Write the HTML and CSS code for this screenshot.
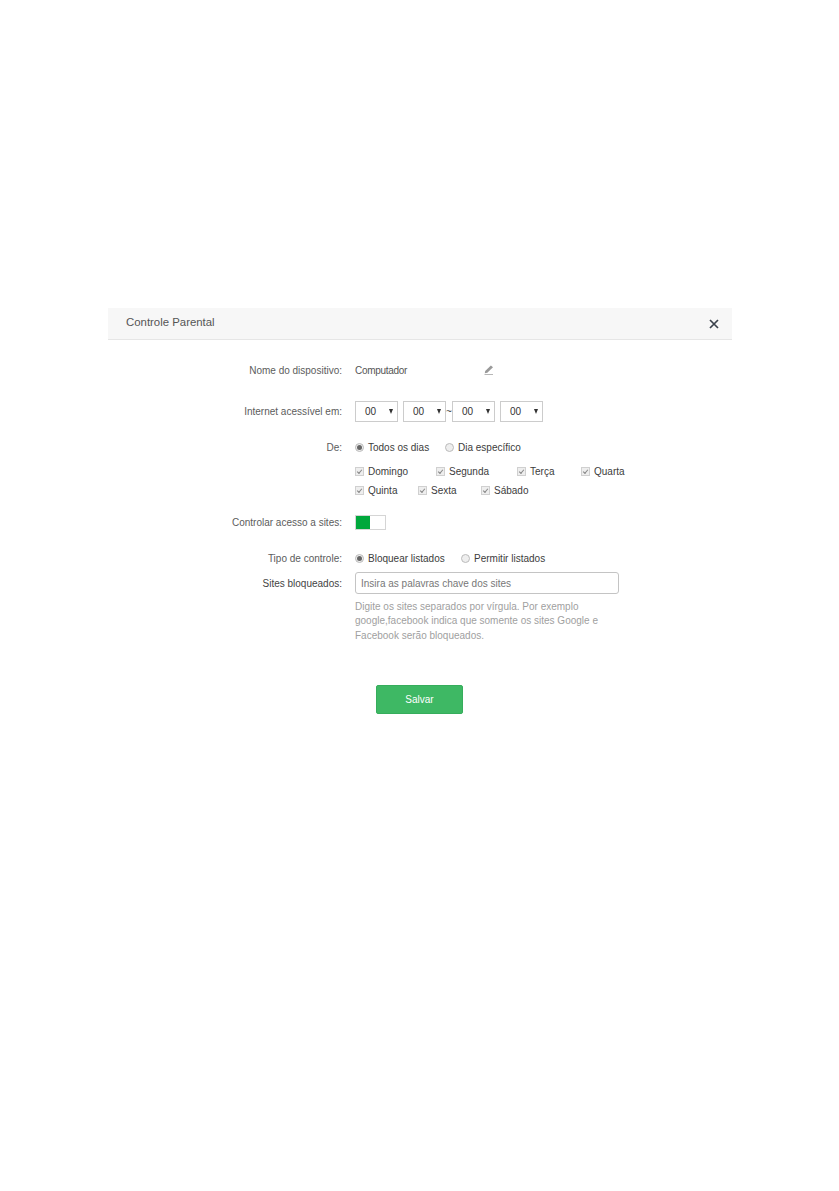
FILE: index.html
```
<!DOCTYPE html>
<html lang="pt-BR">
<head>
  <meta charset="UTF-8">
  <meta name="viewport" content="width=device-width, initial-scale=1.0">
  <title>Controle Parental</title>
  <link rel="stylesheet" href="styles.css">
</head>
<body>
  <div class="panel">
    <!-- Header -->
    <div class="panel-header">
      <span class="panel-title">Controle Parental</span>
      <svg class="close" viewBox="0 0 10 10"><path d="M1 1L9 9M9 1L1 9"/></svg>
    </div>

    <form class="panel-body">
      <!-- Device name -->
      <div class="row row-device">
        <span class="label">Nome do dispositivo:</span>
        <div class="field">
          <span class="device-name">Computador</span>
          <svg class="edit" viewBox="0 0 10 10"><path d="M1.2 6L6.9 .4L9 2.3L3.3 7.8L.8 8.2Z"/><path d="M.5 9H9V9.7H.5Z"/></svg>
        </div>
      </div>

      <!-- Time range -->
      <div class="row row-time">
        <span class="label">Internet acessível em:</span>
        <div class="field times">
          <div class="select"><span>00</span><i class="arrow"></i></div>
          <div class="select"><span>00</span><i class="arrow"></i></div>
          <span class="tilde">~</span>
          <div class="select"><span>00</span><i class="arrow"></i></div>
          <div class="select"><span>00</span><i class="arrow"></i></div>
        </div>
      </div>

      <!-- Days -->
      <div class="row row-from">
        <span class="label">De:</span>
        <div class="field">
          <label class="option opt-all"><input type="radio" name="days" checked><span>Todos os dias</span></label>
          <label class="option opt-day"><input type="radio" name="days"><span>Dia específico</span></label>
        </div>
      </div>
      <div class="row row-days">
        <div class="field">
          <label class="option day-dom"><input type="checkbox" checked disabled><span>Domingo</span></label>
          <label class="option day-seg"><input type="checkbox" checked disabled><span>Segunda</span></label>
          <label class="option day-ter"><input type="checkbox" checked disabled><span>Terça</span></label>
          <label class="option day-qua"><input type="checkbox" checked disabled><span>Quarta</span></label>
        </div>
        <div class="field">
          <label class="option day-qui"><input type="checkbox" checked disabled><span>Quinta</span></label>
          <label class="option day-sex"><input type="checkbox" checked disabled><span>Sexta</span></label>
          <label class="option day-sab"><input type="checkbox" checked disabled><span>Sábado</span></label>
        </div>
      </div>

      <!-- Site access -->
      <div class="row row-switch">
        <span class="label">Controlar acesso a sites:</span>
        <div class="field"><div class="switch"></div></div>
      </div>

      <div class="row row-type">
        <span class="label">Tipo de controle:</span>
        <div class="field">
          <label class="option opt-block"><input type="radio" name="type" checked><span>Bloquear listados</span></label>
          <label class="option opt-allow"><input type="radio" name="type"><span>Permitir listados</span></label>
        </div>
      </div>

      <div class="row row-sites">
        <span class="label label-dark">Sites bloqueados:</span>
        <div class="field"><input class="sites" type="text" placeholder="Insira as palavras chave dos sites"></div>
      </div>
      <p class="help">Digite os sites separados por vírgula. Por exemplo<br>google,facebook indica que somente os sites Google e<br>Facebook serão bloqueados.</p>

      <button class="save" type="button">Salvar</button>
    </form>
  </div>
</body>
</html>
```

FILE: styles.css
```
body {
  margin: 0;
  background: #fff;
  font-family: "Liberation Sans", Arial, sans-serif;
  font-size: 10px;
  color: #444;
}

.panel {
  width: 624px;
  margin: 308px 0 0 108px;
}

.panel-header {
  display: flex;
  justify-content: space-between;
  box-sizing: border-box;
  height: 32px;
  padding: 0 13px 0 18px;
  background: #f7f7f7;
  border-bottom: 1px solid #e6e6e6;
}

.panel-title {
  font-size: 11.4px;
  line-height: 29px;
  color: #555;
}

.close {
  width: 10px;
  height: 10px;
  margin-top: 11px;
  fill: none;
  stroke: #3b424c;
  stroke-width: 1.7;
}

/* Rows */
.row {
  display: grid;
  grid-template-columns: 234px 1fr;
  column-gap: 13px;
  align-items: center;
  height: 20px;
}

.label {
  text-align: right;
  color: #5c5c5c;
}

.label-dark {
  color: #444;
}

.field {
  display: flex;
  align-items: center;
}

.row-device { margin-top: 20px; }
.row-time { margin-top: 21px; height: 21px; }
.row-from { margin-top: 15px; }
.row-days {
  display: block;
  height: auto;
  margin-top: 5px;
  padding-left: 247px;
}
.row-days .field { height: 19px; }
.row-switch { margin-top: 12px; }
.row-type { margin-top: 16px; }
.row-sites { margin-top: 4px; height: 22px; }

.device-name {
  width: 129px;
  letter-spacing: -.3px;
  color: #555;
}

.edit {
  width: 10px;
  height: 10px;
  fill: #999;
}

/* Time selects */
.select {
  display: flex;
  align-items: center;
  justify-content: space-between;
  box-sizing: border-box;
  width: 43px;
  height: 21px;
  margin-right: 5px;
  padding: 0 4px 0 9px;
  border: 1px solid #ccc;
  color: #333;
}

.select:nth-child(2) {
  margin-right: 0;
}

.arrow {
  border: 2.5px solid transparent;
  border-top: 5px solid #333;
  border-bottom: 0;
}

.tilde {
  width: 6px;
  text-align: center;
}

/* Radios and checkboxes */
.option {
  display: flex;
  align-items: center;
  white-space: nowrap;
  color: #3c3c3c;
}

.option input {
  appearance: none;
  box-sizing: border-box;
  display: flex;
  flex: none;
  align-items: center;
  justify-content: center;
  width: 9px;
  height: 9px;
  margin: 0 4px 0 0;
  border: 1px solid #bbb;
  background: #eee;
}

.option input[type="radio"] { border-radius: 50%; }

.option input[type="radio"]:checked::before {
  content: "";
  width: 5px;
  height: 5px;
  border-radius: 50%;
  background: #666;
}

.option input[type="checkbox"] {
  border-color: #d0d0d0;
}

.option input[type="checkbox"]::before {
  content: "";
  width: 2px;
  height: 4px;
  border: solid #888;
  border-width: 0 1.4px 1.4px 0;
  transform: translateY(-.5px) rotate(40deg);
}

.opt-all { width: 90px; }
.opt-block { width: 106px; }
.day-dom { width: 81px; }
.day-seg { width: 81px; }
.day-ter { width: 64px; }
.day-qui,
.day-sex { width: 63px; }

.switch {
  box-sizing: border-box;
  width: 31px;
  height: 15px;
  border: 1px solid #d5d5d5;
  background: linear-gradient(to right, #00a83c 14px, #fff 14px);
}

.sites {
  box-sizing: border-box;
  width: 264px;
  height: 22px;
  padding: 0 5px;
  border: 1px solid #c4c4c4;
  border-radius: 3px;
  font: inherit;
}

.sites::placeholder { color: #777; }

.help {
  margin: 6px 0 0 247px;
  line-height: 14.4px;
  color: #a0a0a0;
}

.save {
  display: block;
  width: 87px;
  height: 29px;
  margin: 42px 0 0 268px;
  padding: 0;
  border: 1px solid #36ad5c;
  border-radius: 2px;
  background: #3eb864;
  color: #fff;
  font: inherit;
}
```
